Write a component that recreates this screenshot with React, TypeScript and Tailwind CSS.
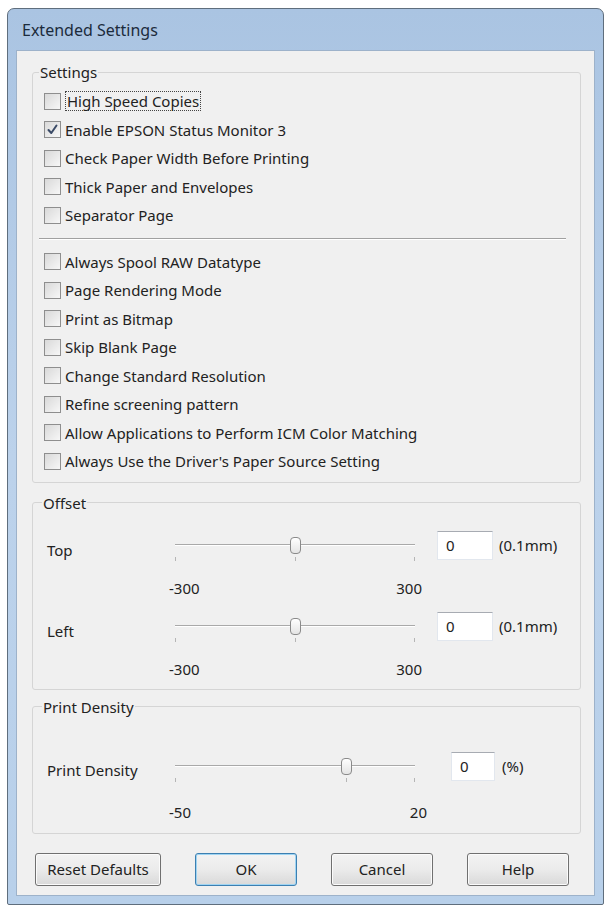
import React from 'react';

const topItems = [
  { label: 'High Speed Copies', checked: false, focus: true },
  { label: 'Enable EPSON Status Monitor 3', checked: true },
  { label: 'Check Paper Width Before Printing', checked: false },
  { label: 'Thick Paper and Envelopes', checked: false },
  { label: 'Separator Page', checked: false },
];

const bottomItems = [
  'Always Spool RAW Datatype',
  'Page Rendering Mode',
  'Print as Bitmap',
  'Skip Blank Page',
  'Change Standard Resolution',
  'Refine screening pattern',
  'Allow Applications to Perform ICM Color Matching',
  "Always Use the Driver's Paper Source Setting",
];

function CheckBox({ checked }: { checked?: boolean }) {
  return (
    <span className="w-[17px] h-[17px] shrink-0 border border-[#8e8e8e] bg-gradient-to-br from-[#d9d9d9] to-[#f7f7f7] flex items-center justify-center">
      {checked && (
        <svg width="13" height="13" viewBox="0 0 13 13">
          <path d="M2.5 7 L5.3 10 L10.5 2.5" fill="none" stroke="#3a4a66" strokeWidth="2" strokeLinecap="round" strokeLinejoin="round" />
        </svg>
      )}
    </span>
  );
}

function CheckRow({ label, checked, focus }: { label: string; checked?: boolean; focus?: boolean }) {
  return (
    <div className="h-[28.5px] flex items-center gap-[4px]">
      <CheckBox checked={checked} />
      <span className={focus ? 'border border-dotted border-[#444] px-[1px] leading-[18px]' : 'leading-[18px]'}>{label}</span>
    </div>
  );
}

function Slider({ pos }: { pos: number }) {
  return (
    <div className="relative w-[240px] h-[32px]">
      <div className="absolute left-0 right-0 top-[14px] h-[2px] border-t border-[#a9a9a9] border-b border-b-[#ffffff]" />
      <div
        className="absolute top-[7px] w-[11px] h-[17px] -ml-[5px] rounded-[4px] border border-[#8a8a8a] bg-gradient-to-b from-[#ffffff] to-[#e4e4e4]"
        style={{ left: `${pos}%` }}
      />
      <div className="absolute top-[27px] left-0 w-[1px] h-[4px] bg-[#b5b5b5]" />
      <div className="absolute top-[27px] w-[1px] h-[4px] bg-[#b5b5b5]" style={{ left: `${pos}%` }} />
      <div className="absolute top-[27px] right-0 w-[1px] h-[4px] bg-[#b5b5b5]" />
    </div>
  );
}

function TextBox({ w }: { w: string }) {
  return (
    <div className={`${w} h-[29px] bg-white border border-[#e2e7ee] border-t-[#a7abb2] flex items-center pl-[8px]`}>0</div>
  );
}

function Button({ label, primary, w }: { label: string; primary?: boolean; w: string }) {
  return (
    <button
      className={`${w} h-[33px] rounded-[3px] border ${
        primary ? 'border-[#3c7fb1] shadow-[inset_0_0_0_1px_#9fd4f2]' : 'border-[#707070] shadow-[inset_0_0_0_1px_#fbfbfb]'
      } bg-gradient-to-b from-[#f3f3f3] via-[#ebebeb] to-[#d9d9d9] text-[#222]`}
    >
      {label}
    </button>
  );
}

export default function App() {
  return (
    <div className="w-[606px] h-[907px] bg-white pt-[8px] pl-[7px] font-['Noto_Sans',sans-serif] text-[15px] text-[#222]">
      <div className="w-[597px] h-[897px] flex flex-col px-[8px] pb-[8px] border border-[#5f6e7d] rounded-t-[7px] rounded-b-[2px] bg-gradient-to-b from-[#aac4e2] via-[#bcd2eb] to-[#b8d0ea]">
        <div className="h-[41px] flex items-center pl-[6px] text-[16px] text-[#1c2b3c]">Extended Settings</div>

        <div className="flex-1 flex flex-col bg-[#f0f0f0] border border-[#9db2ca] pl-[15px] pr-[13px]">
          <fieldset className="mt-[11px] border border-[#d5d5d5] rounded-[3px] pl-[11px] pr-[14px] pt-[5px] pb-[6px]">
            <legend className="ml-[-5px] px-[1px] leading-[20px]">Settings</legend>
            {topItems.map((it) => (
              <CheckRow key={it.label} label={it.label} checked={it.checked} focus={it.focus} />
            ))}
            <div className="h-[18px] flex items-center -ml-[5px]">
              <div className="w-full h-[2px] border-t border-[#a0a0a0] border-b border-b-white" />
            </div>
            {bottomItems.map((l) => (
              <CheckRow key={l} label={l} />
            ))}
          </fieldset>

          <fieldset className="mt-[10px] border border-[#d5d5d5] rounded-[3px] pl-[14px] pt-[17px] pb-[9px]">
            <legend className="ml-[-5px] px-[1px] leading-[20px]">Offset</legend>
            {['Top', 'Left'].map((name, i) => (
              <div key={name} className={i === 1 ? 'mt-[12px]' : ''}>
                <div className="flex items-center h-[32px]">
                  <div className="w-[128px] pt-[10px]">{name}</div>
                  <Slider pos={50} />
                  <div className="ml-[22px]">
                    <TextBox w="w-[56px]" />
                  </div>
                  <div className="ml-[6px]">(0.1mm)</div>
                </div>
                <div className="mt-[17px] ml-[122px] w-[253px] h-[20px] flex justify-between items-center">
                  <span>-300</span>
                  <span>300</span>
                </div>
              </div>
            ))}
          </fieldset>

          <fieldset className="mt-[7px] border border-[#d5d5d5] rounded-[3px] pl-[14px] pt-[34px] pb-[10px]">
            <legend className="ml-[-5px] px-[1px] leading-[20px]">Print Density</legend>
            <div className="flex items-center h-[32px]">
              <div className="w-[128px] pt-[8px]">Print Density</div>
              <Slider pos={71.4} />
              <div className="ml-[36px]">
                <TextBox w="w-[44px]" />
              </div>
              <div className="ml-[7px]">(%)</div>
            </div>
            <div className="mt-[20px] ml-[122px] w-[258px] h-[20px] flex justify-between items-center">
              <span>-50</span>
              <span>20</span>
            </div>
          </fieldset>

          <div className="mt-[19px] pl-[3px] flex gap-[34px]">
            <Button label="Reset Defaults" w="w-[126px]" />
            <Button label="OK" primary w="w-[102px]" />
            <Button label="Cancel" w="w-[102px]" />
            <Button label="Help" w="w-[102px]" />
          </div>
        </div>
      </div>
    </div>
  );
}
